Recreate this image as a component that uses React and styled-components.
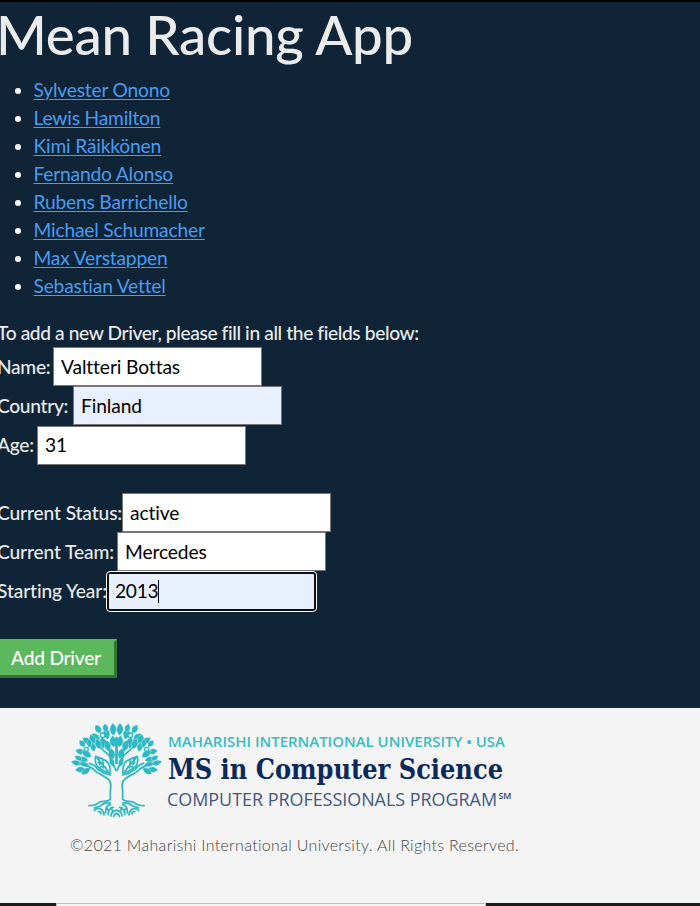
import React from 'react';
import styled, { createGlobalStyle } from 'styled-components';

const GlobalStyle = createGlobalStyle`
  * { box-sizing: border-box; }
  html, body { margin: 0; padding: 0; overflow: hidden; }
  body {
    font-family: Lato, sans-serif;
    font-size: 20px;
    line-height: 28px;
    font-variant-ligatures: none;
  }
`;

const Page = styled.div`
  width: 700px;
  height: 906px;
  display: flex;
  flex-direction: column;
  overflow: hidden;
  background: #0f2537;
  border-top: 2px solid #000;
`;

const Main = styled.main`
  height: 706px;
  flex: none;
  margin-left: -3px;
  color: #ebebeb;
`;

const Title = styled.h1`
  margin: 0;
  height: 74px;
  font-size: 54.6px;
  font-weight: 500;
  letter-spacing: -0.25px;
  line-height: 65px;
  text-indent: -1px;
  white-space: nowrap;
`;

const DriverList = styled.ul`
  margin: 0;
  padding: 0 0 0 36.5px;
  height: 241px;
  font-size: 19.2px;
  letter-spacing: -0.18px;
`;

const DriverItem = styled.li`
  height: 28px;
  line-height: 28px;
  &::marker { color: #fff; }
`;

const DriverLink = styled.a`
  color: #4c9bee;
  text-decoration: underline;
  text-decoration-thickness: 1px;
  text-underline-offset: 2px;
`;

const Intro = styled.p`
  margin: 0;
  height: 30px;
  line-height: 31px;
  font-size: 19.2px;
  font-weight: 500;
  letter-spacing: -0.39px;
  white-space: nowrap;
`;

const FieldGroup = styled.div`
  display: grid;
  grid-auto-rows: 39.3px;
  margin-bottom: 28px;
  letter-spacing: ${(p) => p.$tracking}px;
`;

const FieldRow = styled.div`
  display: flex;
  align-items: center;
`;

const Label = styled.label`
  flex: none;
  width: ${(p) => p.$width}px;
  font-size: 19.2px;
  font-weight: 500;
  white-space: nowrap;
`;

const Field = styled.div`
  display: flex;
  align-items: center;
  width: 209px;
  height: 39px;
  padding: 0 ${(p) => (p.$focused ? 6 : 7)}px;
  font-size: 19.2px;
  letter-spacing: -0.1px;
  color: #000;
  border: 1px solid #767676;
  background: ${(p) => (p.$filled ? '#e8f0fe' : '#fff')};
  ${(p) => p.$focused && `
    letter-spacing: -0.3px;
    border: 2px solid #101010;
    border-radius: 3px;
    outline: 1px solid #fff;
  `}
`;

const Caret = styled.span`
  width: 1px;
  height: 23px;
  background: #000;
`;

const AddButton = styled.button`
  display: block;
  width: 120px;
  height: 39px;
  padding: 0 2px 2px 0;
  font: 500 19.2px Lato, sans-serif;
  letter-spacing: -0.25px;
  color: #fff;
  background: #5cb85c;
  border: 3px solid;
  border-color: #5cb85c #367436 #367436 #5cb85c;
`;

const Footer = styled.footer`
  flex: none;
  height: 195px;
  padding: 2px 0 0 60px;
  background: #f4f4f4;
`;

const Brand = styled.svg`
  display: block;
  width: 470px;
  height: 120px;
`;

const Copyright = styled.p`
  margin: 0 0 0 10px;
  font-size: 16px;
  font-weight: 300;
  letter-spacing: 0.32px;
  line-height: 30px;
  color: #444;
  white-space: nowrap;
`;

const Taskbar = styled.div`
  flex: none;
  height: 3px;
  padding-left: 56px;
  background: #1b1e1d;
`;

const TaskbarPanel = styled.div`
  width: 430px;
  height: 3px;
  background: #f4f4f4;
  border: 1px solid #bcc1be;
  border-bottom: 0;
`;

const drivers = [
  'Sylvester Onono', 'Lewis Hamilton', 'Kimi Räikkönen', 'Fernando Alonso',
  'Rubens Barrichello', 'Michael Schumacher', 'Max Verstappen', 'Sebastian Vettel',
];

const personal = [
  { label: 'Name:', width: 56, value: 'Valtteri Bottas' },
  { label: 'Country:', width: 76, value: 'Finland', filled: true },
  { label: 'Age:', width: 40, value: '31' },
];

const career = [
  { label: 'Current Status:', width: 125, value: 'active' },
  { label: 'Current Team:', width: 120, value: 'Mercedes' },
  { label: 'Starting Year:', width: 110, value: '2013', filled: true, focused: true },
];

// Leaves of one half of the crown: base x, base y, angle from vertical, length, width.
const leaves = [
  [160, 77, -2, 38, 20], [161, 112, -6, 36, 20], [144, 89, -14, 38, 20],
  [139, 66, -12, 25, 17], [122, 70, -30, 30, 18], [119, 93, -48, 33, 20],
  [131, 116, -8, 36, 19], [146, 124, -10, 34, 20], [118, 117, -14, 33, 19],
  [103, 103, -22, 32, 19], [93, 101, -55, 31, 18], [102, 125, -10, 28, 17],
  [89, 114, -5, 27, 15], [75, 111, -40, 26, 16], [76, 129, -75, 31, 18],
  [94, 141, -58, 34, 19], [85, 151, -82, 34, 18], [66, 150, -62, 25, 15],
  [65, 163, -75, 33, 16], [87, 166, -78, 31, 15], [76, 177, -97, 31, 17],
  [91, 174, -125, 33, 17], [160, 148, -12, 35, 17], [161, 172, -18, 34, 15],
];

function Leaf({ leaf: [x, y, angle, length, width] }) {
  const d = `M0 0C${-width * 0.8} ${-length * 0.4} ${-width * 0.5} ${-length * 0.72} 0 ${-length}C${width * 0.5} ${-length * 0.72} ${width * 0.8} ${-length * 0.4} 0 0Z`;
  return <path d={d} transform={`translate(${x} ${y}) rotate(${angle})`} />;
}

function TreeHalf() {
  return (
    <g fill="#2bb9c3" stroke="none">
      <g stroke="#f4f4f4" strokeWidth="1">
        {leaves.map((leaf, i) => <Leaf key={i} leaf={leaf} />)}
      </g>
      <g fill="none" stroke="#2bb9c3" strokeWidth="5.2" strokeLinecap="round" strokeLinejoin="round">
        <path d="M151 268V240Q155 225 149 212C134 196 116 193 104 181C95 171 84 168 68 163" />
        <path d="M88 160Q106 165 112 177Q129 190 151 195" />
        <path d="M150 190Q153 165 139 153Q126 145 107 139Q103 158 113 171Q128 183 150 190ZM112 145L144 183M118 149L119 164M128 153L131 174M115 158L126 161M121 170L137 171" />
        <path d="M168 181L154 151Q150 135 132 123L119 110M153 149L148 121L134 90M168 160V83" />
        <path d="M151 268C139 279 130 270 118 277Q107 287 87 287M151 279Q133 276 121 288L103 294" />
        <path d="M103 302Q111 291 123 298Q132 304 132 315M115 305Q123 304 123 312M137 309Q136 286 151 284M145 314Q144 295 160 292M153 318Q153 304 169 301M161 319Q163 310 170 311M145 300L138 294M157 302L153 292" />
      </g>
      <circle cx="128" cy="76" r="7" fill="#f4f4f4" stroke="#2bb9c3" strokeWidth="4" />
      <circle cx="79" cy="118" r="6" fill="#f4f4f4" stroke="#2bb9c3" strokeWidth="4" />
    </g>
  );
}

function UniversityLogo() {
  return (
    <Brand viewBox="0 0 470 120" role="img" aria-label="Maharishi International University">
      <g transform="scale(.3333)">
        <TreeHalf />
        <g transform="translate(339 0) scale(-1 1)"><TreeHalf /></g>
      </g>
      <text x="108" y="36.7" fill="#35bdc2" fontFamily="Open Sans" fontSize="14.6" fontWeight="600" textLength="337" lengthAdjust="spacingAndGlyphs">MAHARISHI INTERNATIONAL UNIVERSITY • USA</text>
      <text x="108" y="69" fill="#0b2a5b" fontFamily="DejaVu Serif Condensed, DejaVu Serif" fontSize="27.5" fontWeight="700" textLength="335" lengthAdjust="spacingAndGlyphs">MS in Computer Science</text>
      <text x="107" y="96" fill="#42587f" fontFamily="Open Sans" fontSize="18" textLength="330" lengthAdjust="spacingAndGlyphs">COMPUTER PROFESSIONALS PROGRAM</text>
      <text x="438.5" y="89" fill="#2a4270" fontFamily="Open Sans" fontSize="8.5" fontWeight="600" textLength="13" lengthAdjust="spacingAndGlyphs">SM</text>
    </Brand>
  );
}

function Fields({ items, tracking }) {
  return (
    <FieldGroup $tracking={tracking}>
      {items.map((f) => (
        <FieldRow key={f.label}>
          <Label $width={f.width}>{f.label}</Label>
          <Field $filled={f.filled} $focused={f.focused}>
            {f.value}
            {f.focused && <Caret />}
          </Field>
        </FieldRow>
      ))}
    </FieldGroup>
  );
}

export default function App() {
  return (
    <Page>
      <GlobalStyle />
      <Main>
        <Title>Mean Racing App</Title>
        <DriverList>
          {drivers.map((name) => (
            <DriverItem key={name}><DriverLink href="#">{name}</DriverLink></DriverItem>
          ))}
        </DriverList>
        <Intro>To add a new Driver, please fill in all the fields below:</Intro>
        <Fields items={personal} tracking={-0.32} />
        <Fields items={career} tracking={-0.12} />
        <AddButton type="button">Add Driver</AddButton>
      </Main>
      <Footer>
        <UniversityLogo />
        <Copyright>©2021 Maharishi International University. All Rights Reserved.</Copyright>
      </Footer>
      <Taskbar><TaskbarPanel /></Taskbar>
    </Page>
  );
}
